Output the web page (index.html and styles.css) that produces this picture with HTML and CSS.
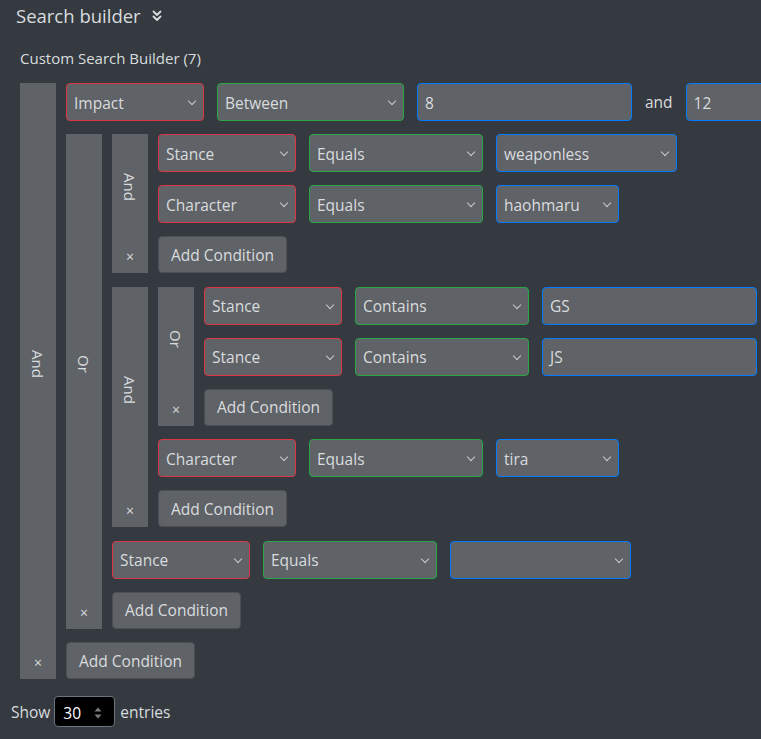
FILE: index.html
```html
<!DOCTYPE html>
<html lang="en">
<head>
<meta charset="utf-8">
<title>Search builder</title>
<link rel="stylesheet" href="styles.css">
</head>
<body>
<div class="page">
  <header class="sb-header">
    <h2 class="sb-title">Search builder</h2>
    <svg class="sb-toggle" viewBox="0 0 10 12" width="10" height="12" aria-hidden="true">
      <polyline points="1.5,1.5 5,5 8.5,1.5"/>
      <polyline points="1.5,6.5 5,10 8.5,6.5"/>
    </svg>
  </header>

  <div class="sb">
    <div class="sb-caption">Custom Search Builder (7)</div>

    <div class="group">
      <div class="logic"><div class="logic-label"><span>And</span></div><div class="del">×</div></div>
      <div class="group-body">
        <div class="criteria">
          <div class="select col">Impact</div>
          <div class="select cond cond-between">Between</div>
          <div class="input">8</div>
          <span class="joiner">and</span>
          <div class="input">12</div>
        </div>

        <div class="group">
          <div class="logic"><div class="logic-label"><span>Or</span></div><div class="del">×</div></div>
          <div class="group-body">

            <div class="group">
              <div class="logic"><div class="logic-label"><span>And</span></div><div class="del">×</div></div>
              <div class="group-body">
                <div class="criteria">
                  <div class="select col">Stance</div>
                  <div class="select cond">Equals</div>
                  <div class="select val val-wide">weaponless</div>
                </div>
                <div class="criteria">
                  <div class="select col">Character</div>
                  <div class="select cond">Equals</div>
                  <div class="select val val-narrow">haohmaru</div>
                </div>
                <button class="btn-add" type="button">Add Condition</button>
              </div>
            </div>

            <div class="group">
              <div class="logic"><div class="logic-label"><span>And</span></div><div class="del">×</div></div>
              <div class="group-body">
                <div class="group">
                  <div class="logic"><div class="logic-label"><span>Or</span></div><div class="del">×</div></div>
                  <div class="group-body">
                    <div class="criteria">
                      <div class="select col">Stance</div>
                      <div class="select cond">Contains</div>
                      <div class="input">GS</div>
                    </div>
                    <div class="criteria">
                      <div class="select col">Stance</div>
                      <div class="select cond">Contains</div>
                      <div class="input">JS</div>
                    </div>
                    <button class="btn-add" type="button">Add Condition</button>
                  </div>
                </div>
                <div class="criteria">
                  <div class="select col">Character</div>
                  <div class="select cond">Equals</div>
                  <div class="select val val-narrow">tira</div>
                </div>
                <button class="btn-add" type="button">Add Condition</button>
              </div>
            </div>

            <div class="criteria">
              <div class="select col">Stance</div>
              <div class="select cond">Equals</div>
              <div class="select val val-wide"></div>
            </div>
            <button class="btn-add" type="button">Add Condition</button>
          </div>
        </div>

        <button class="btn-add" type="button">Add Condition</button>
      </div>
    </div>
  </div>

  <div class="length">
    <span>Show</span>
    <div class="length-select">
      <span>30</span>
      <svg class="spin" viewBox="0 0 8 12" width="8" height="12" aria-hidden="true">
        <polygon points="4,0.5 7.5,4.5 0.5,4.5"/>
        <polygon points="0.5,7.5 7.5,7.5 4,11.5"/>
      </svg>
    </div>
    <span>entries</span>
  </div>
</div>
</body>
</html>
```

FILE: styles.css
```css
* {
  box-sizing: border-box;
}

html,
body {
  margin: 0;
  background: #343a40;
}

body {
  font-family: "Open Sans", "Noto Sans", sans-serif;
  color: #d9dcdf;
}

.page {
  width: 761px;
  height: 739px;
  overflow: hidden;
}

/* header */
.sb-header {
  display: flex;
  align-items: center;
  gap: 11px;
  height: 32px;
  padding-left: 16px;
}

.sb-title {
  margin: 0;
  font-size: 18.5px;
  font-weight: 400;
  line-height: 26px;
}

.sb-toggle {
  fill: none;
  stroke: #d9dcdf;
  stroke-width: 1.8;
  stroke-linecap: round;
  stroke-linejoin: round;
}

/* builder */
.sb {
  padding-left: 20px;
}

.sb-caption {
  margin-top: 16px;
  font-size: 15px;
  line-height: 20px;
}

.sb > .group {
  margin-top: 15px;
}

.group {
  display: flex;
  align-items: stretch;
  gap: 10px;
}

.group-body > .group {
  margin-bottom: 13.5px;
}

.logic {
  flex: none;
  width: 36px;
  background: #5f6266;
  display: flex;
  flex-direction: column;
}

.logic-label {
  flex: 1;
  display: flex;
  align-items: center;
  justify-content: center;
  font-size: 15px;
}

.logic-label span {
  writing-mode: vertical-rl;
}

.del {
  height: 34px;
  display: flex;
  align-items: center;
  justify-content: center;
  font-size: 14px;
  padding-top: 1px;
}

.group-body {
  display: flex;
  flex-direction: column;
  align-items: flex-start;
  min-width: 0;
}

.criteria {
  display: flex;
  align-items: center;
  gap: 13px;
  margin-bottom: 13px;
}

/* form controls */
.select,
.input {
  position: relative;
  flex: none;
  display: flex;
  align-items: center;
  height: 38px;
  padding: 1px 7px 0;
  border: 1px solid;
  border-radius: 4px;
  background: #5f6266;
  font-size: 15.5px;
}

.select::after {
  content: "";
  position: absolute;
  right: 8px;
  top: 50%;
  width: 5px;
  height: 5px;
  margin-top: -4px;
  border-right: 1.5px solid #c9cbce;
  border-bottom: 1.5px solid #c9cbce;
  transform: rotate(45deg);
}

.col {
  width: 138px;
  border-color: #dc3545;
}

.cond {
  width: 174px;
  border-color: #28a745;
}

.cond-between {
  width: 187px;
}

.val {
  border-color: #007bff;
}

.val-wide {
  width: 181px;
}

.val-narrow {
  width: 123px;
}

.input {
  width: 215px;
  border-color: #007bff;
}

.joiner {
  font-size: 15.5px;
}

.btn-add {
  height: 37px;
  padding: 0 12px;
  border: 1px solid #4c4f54;
  border-radius: 4px;
  background: #5f6266;
  color: inherit;
  font-family: inherit;
  font-size: 15.5px;
}

/* page length */
.length {
  display: flex;
  align-items: center;
  gap: 4px;
  margin-top: 17px;
  padding-left: 11px;
  font-size: 15.5px;
}

.length-select {
  position: relative;
  display: flex;
  align-items: center;
  justify-content: space-between;
  width: 61px;
  height: 31px;
  padding: 2px 12px 0 8px;
  border: 1px solid #6c757d;
  border-radius: 4px;
  background: #000;
  color: #fff;
  margin-right: 1px;
}

.spin {
  fill: #7a7d80;
}
```
